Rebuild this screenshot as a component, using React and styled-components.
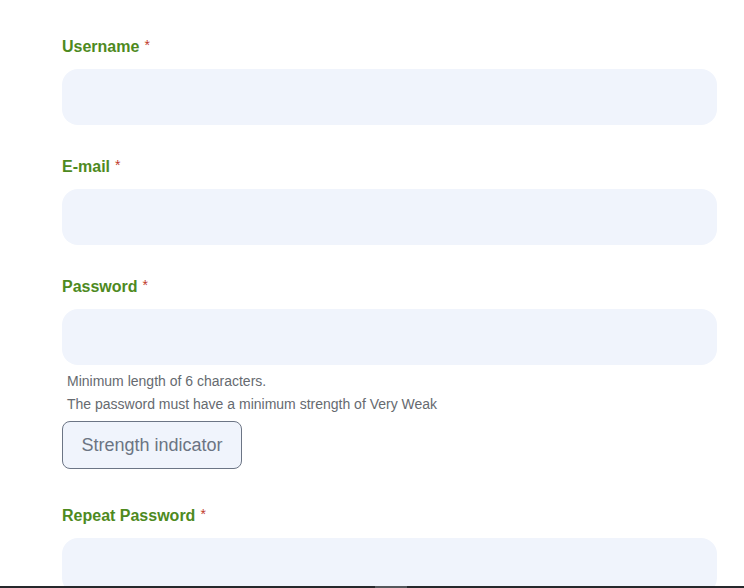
import React from "react"
import styled, { createGlobalStyle } from "styled-components"

const GlobalStyle = createGlobalStyle`
  html, body {
    margin: 0;
    padding: 0;
    background: #ffffff;
    font-family: "Liberation Sans", Arial, sans-serif;
  }
`

const Page = styled.div`
  height: 586px;
  overflow: hidden;
  padding: 37px 27px 0 62px;
  box-sizing: border-box;
`

const Form = styled.form`
  display: flex;
  flex-direction: column;
`

const Field = styled.div`
  display: flex;
  flex-direction: column;
  margin-bottom: ${({ $hasHints }) => ($hasHints ? "37px" : "32px")};
`

const Label = styled.label`
  font-size: 16px;
  line-height: 19px;
  font-weight: 700;
  color: #4e8a1e;
  margin-bottom: 13px;
`

const Required = styled.span`
  color: #c0392b;
  font-weight: 400;
  font-size: 14px;
  margin-left: 5px;
  vertical-align: top;
  position: relative;
  top: -1px;
`

const Input = styled.input`
  height: 56px;
  border: none;
  border-radius: 16px;
  background: #f0f4fc;
  padding: 0 18px;
  font-family: inherit;
  font-size: 16px;
  outline: none;
  box-sizing: border-box;
`

const Hint = styled.div`
  font-size: 14px;
  line-height: 23px;
  color: #666a70;
  padding-left: 5px;
  &:first-of-type {
    margin-top: 5px;
  }
`

const StrengthButton = styled.button`
  align-self: flex-start;
  margin-top: 5px;
  height: 48px;
  width: 180px;
  padding: 0;
  border: 1px solid #6c7585;
  border-radius: 8px;
  background: #f0f4fc;
  color: #6b7483;
  font-family: inherit;
  font-size: 18px;
  cursor: pointer;
`

const BottomBar = styled.div`
  position: fixed;
  left: 0;
  right: 0;
  bottom: 0;
  height: 2px;
  background: #26282b;
  &::after {
    content: "";
    position: absolute;
    left: 375px;
    width: 32px;
    top: 0;
    bottom: 0;
    background: #55585c;
  }
`

const fields = [
  { id: "username", label: "Username", type: "text" },
  { id: "email", label: "E-mail", type: "email" },
  { id: "password", label: "Password", type: "password", hints: true },
  { id: "repeat", label: "Repeat Password", type: "password" },
]

const App = () => (
  <>
    <GlobalStyle />
    <Page>
      <Form onSubmit={e => e.preventDefault()}>
        {fields.map(f => (
          <Field key={f.id} $hasHints={f.hints}>
            <Label htmlFor={f.id}>
              {f.label}
              <Required>*</Required>
            </Label>
            <Input id={f.id} type={f.type} />
            {f.hints && (
              <>
                <Hint>Minimum length of 6 characters.</Hint>
                <Hint>The password must have a minimum strength of Very Weak</Hint>
                <StrengthButton type="button">Strength indicator</StrengthButton>
              </>
            )}
          </Field>
        ))}
      </Form>
    </Page>
    <BottomBar />
  </>
)

export default App
